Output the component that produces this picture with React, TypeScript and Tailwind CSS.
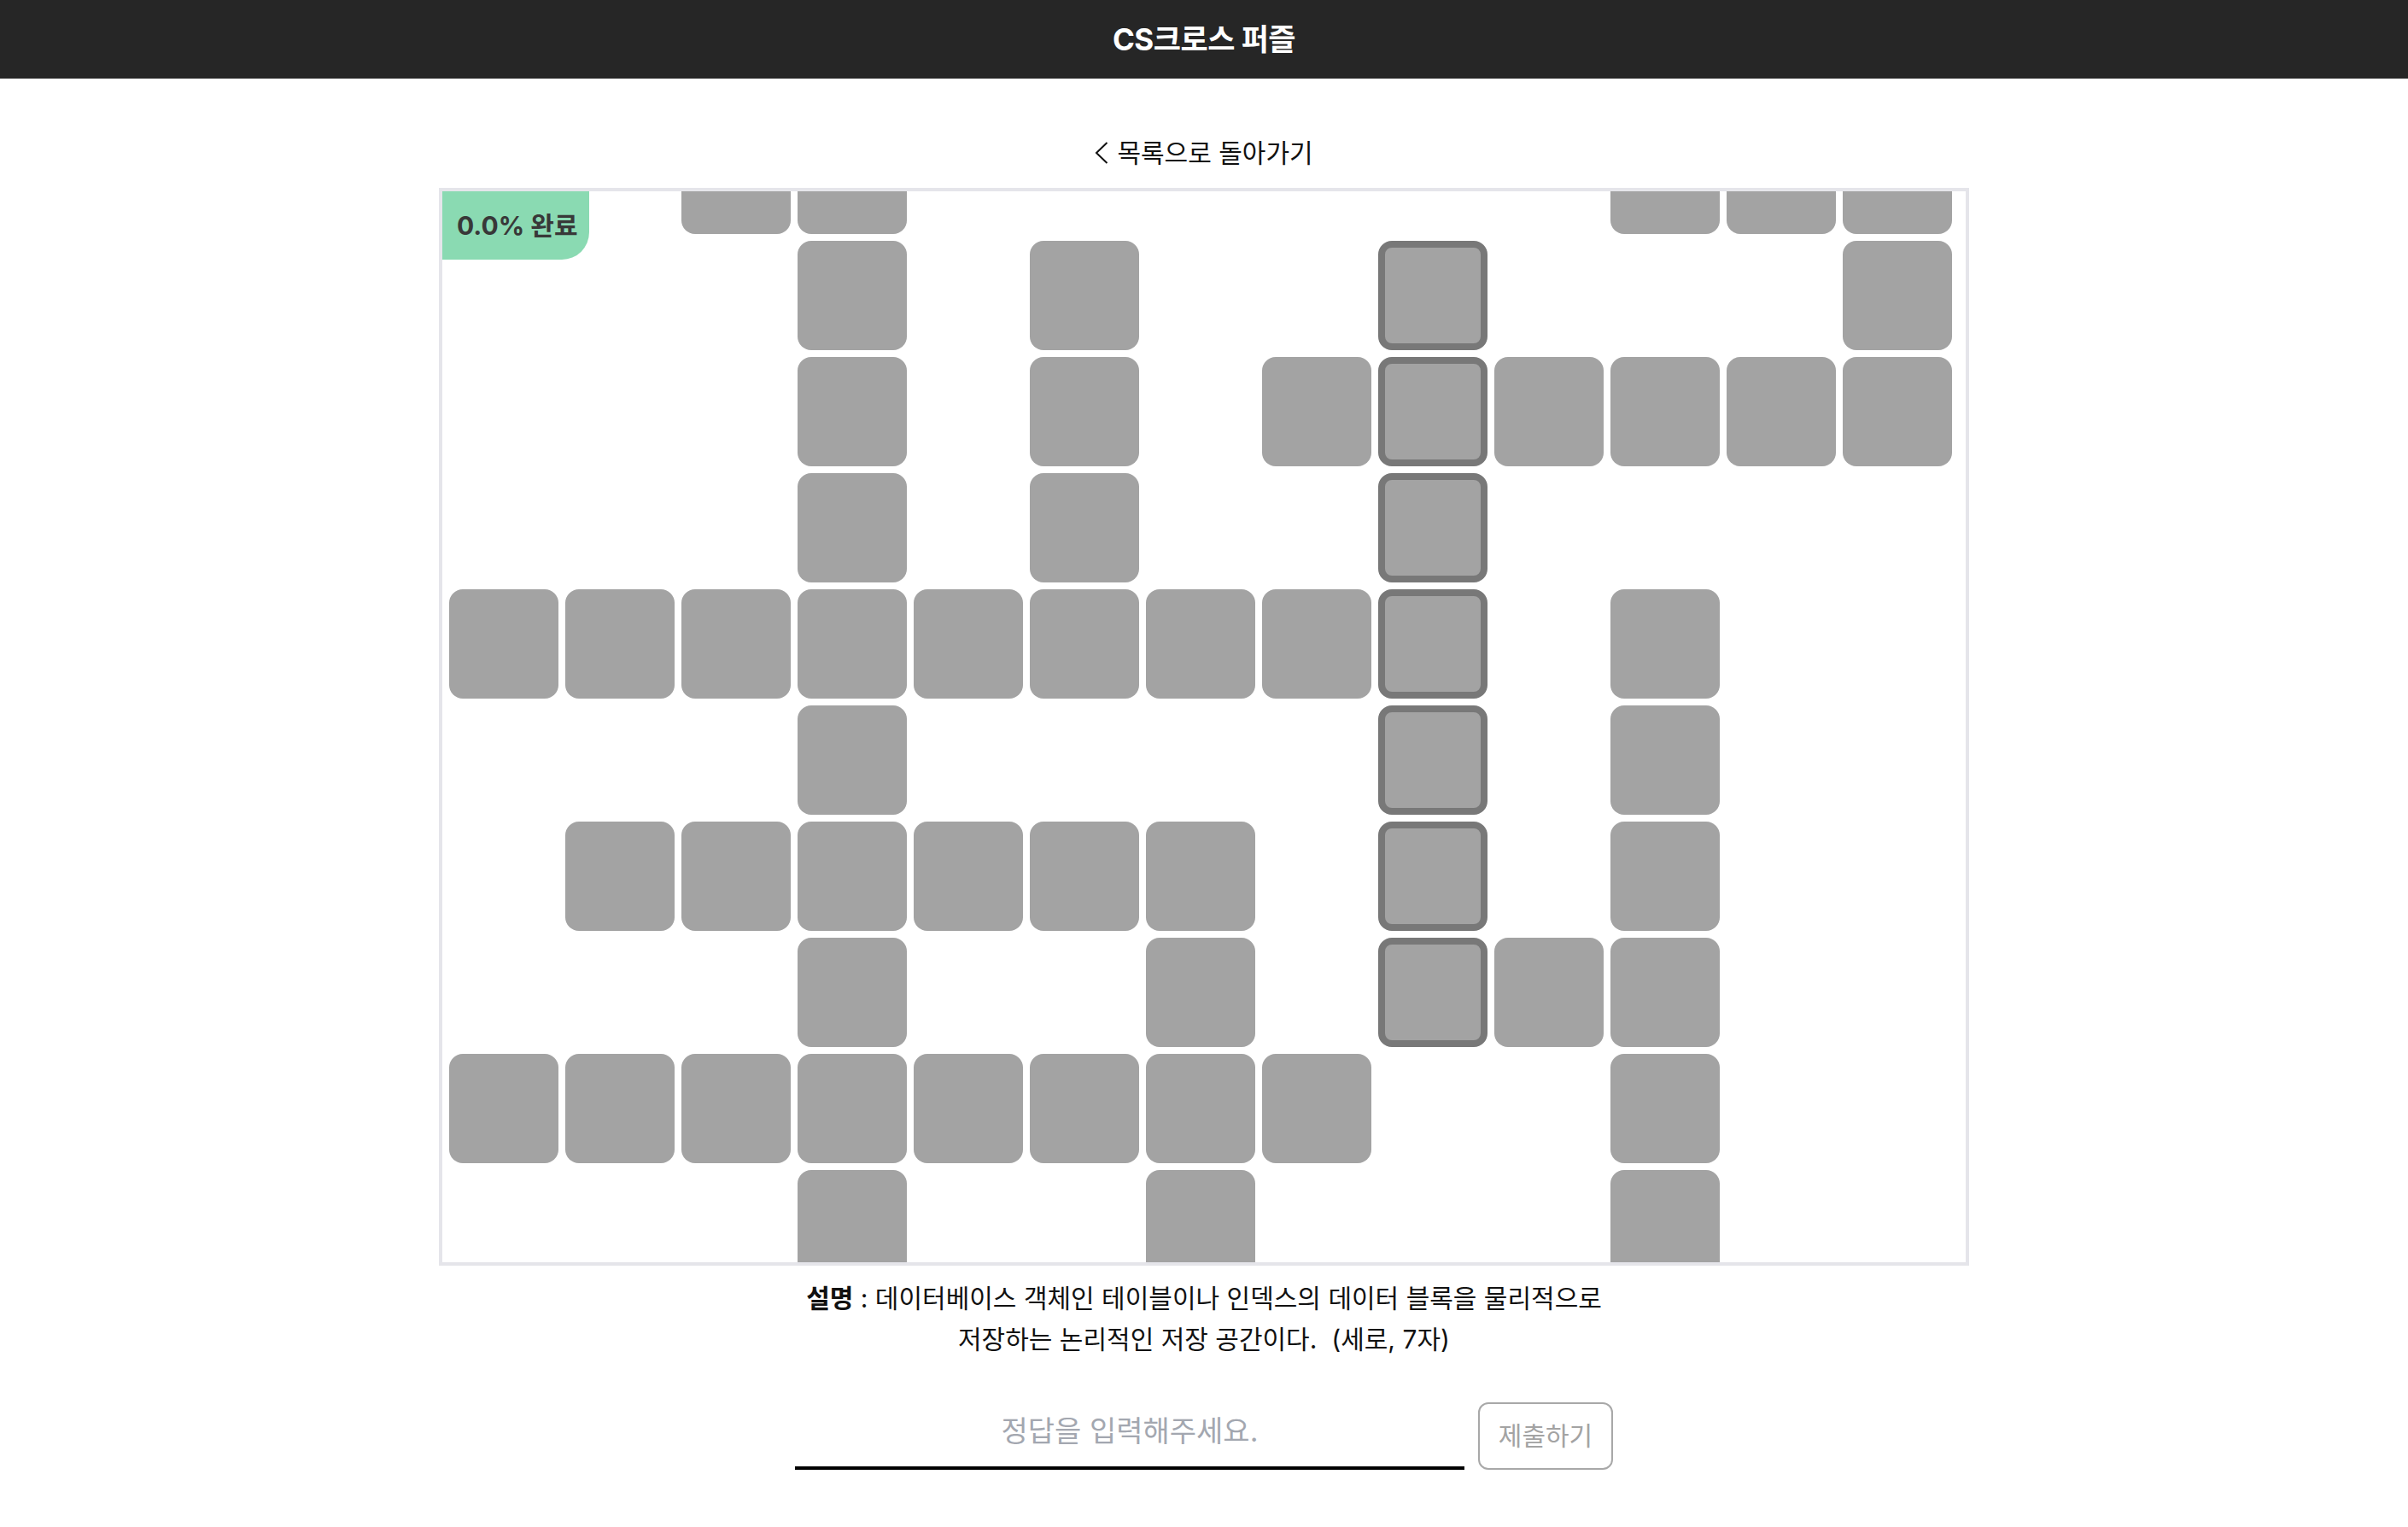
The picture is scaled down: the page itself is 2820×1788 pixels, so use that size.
import { useState } from "react";

// '.' empty, '#' cell, '@' cell of the selected word
const board = [
  "..##......###",
  "...#.#..@...#",
  "...#.#.#@####",
  "...#.#..@....",
  "########@.#..",
  "...#....@.#..",
  ".######.@.#..",
  "...#..#.@##..",
  "########..#..",
  "...#..#...#..",
  "...#..#...#..",
];

function Cell({ kind }: { kind: string }) {
  if (kind === "#") {
    return <div className="w-[128px] h-[128px] rounded-2xl bg-[#a3a3a3]" />;
  }
  if (kind === "@") {
    return (
      <div className="w-[128px] h-[128px] rounded-2xl bg-[#a3a3a3] border-[8px] border-[#787878]" />
    );
  }
  return <div className="w-[128px] h-[128px]" />;
}

export default function App() {
  const [answer, setAnswer] = useState("");

  return (
    <div className="min-h-screen bg-white font-['Inter','Noto_Sans_CJK_KR',sans-serif] text-[#111]">
      <header className="h-[92px] bg-[#262626] flex items-center justify-center">
        <h1 className="text-white text-[35px] font-bold tracking-[-0.5px]">CS크로스 퍼즐</h1>
      </header>

      <main className="flex flex-col items-center">
        <a className="mt-[67px] h-[40px] flex items-center gap-[10px] text-[30px] leading-[40px] cursor-pointer">
          <svg width="16" height="26" viewBox="0 0 16 26" fill="none">
            <polyline points="14.5,1 2,13 14.5,25" stroke="#111" strokeWidth="2" />
          </svg>
          <span>목록으로 돌아가기</span>
        </a>

        <div className="relative mt-[21px] w-[1792px] h-[1262px] border-4 border-[#e5e5ea] overflow-hidden">
          <div className="absolute top-0 left-0 z-10 h-[80px] w-[172px] pl-[17px] flex items-center bg-[#8adab2] rounded-br-[32px]">
            <span className="text-[30px] font-bold text-[#383838]">0.0% 완료</span>
          </div>
          <div className="mt-[-78px] pl-2 grid grid-cols-[repeat(13,128px)] gap-2">
            {board.map((row, r) =>
              row.split("").map((c, i) => <Cell key={`${r}-${i}`} kind={c} />)
            )}
          </div>
        </div>

        <p className="mt-[14px] text-[30px] leading-[48px] text-center whitespace-pre-wrap">
          <b className="font-bold">설명</b> : 데이터베이스 객체인 테이블이나 인덱스의 데이터 블록을 물리적으로
          <br />
          저장하는 논리적인 저장 공간이다.  (세로, 7자)
        </p>

        <div className="mt-[50px] flex items-center gap-4">
          <input
            value={answer}
            onChange={(e) => setAnswer(e.target.value)}
            placeholder="정답을 입력해주세요."
            className="w-[784px] h-[79px] pb-[8px] border-b-4 border-black text-center text-[34px] outline-none placeholder:text-[#a3a7b0]"
          />
          <button className="w-[158px] h-[79px] border-2 border-[#a8a8a8] rounded-[12px] bg-white text-[30px] text-[#a3a3a3]">
            제출하기
          </button>
        </div>
      </main>
    </div>
  );
}
